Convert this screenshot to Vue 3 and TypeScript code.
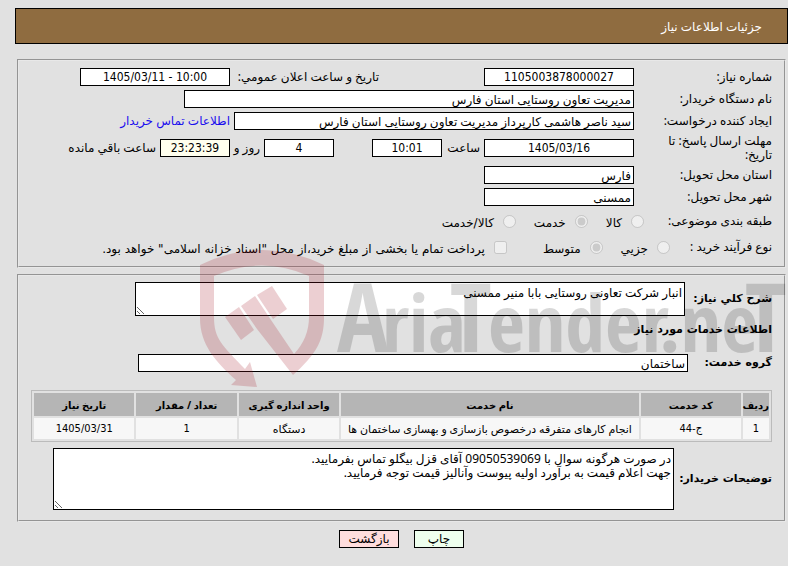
<script setup lang="ts">
import { ref } from 'vue'

interface ServiceRow {
  index: string
  code: string
  name: string
  unit: string
  count: string
  date: string
}

const need = ref({
  number: '1105003878000027',
  announced: '1405/03/11 - 10:00',
  buyer: 'مدیریت تعاون روستایی استان فارس',
  creator: 'سید ناصر هاشمی کارپرداز مدیریت تعاون روستایی استان فارس',
  deadlineDate: '1405/03/16',
  deadlineTime: '10:01',
  daysLeft: '4',
  timeLeft: '23:23:39',
  province: 'فارس',
  city: 'ممسنی',
  subject: 'service',
  process: 'medium',
  treasury: false,
  summary: 'انبار شرکت تعاونی روستایی بابا منیر ممسنی',
  group: 'ساختمان',
  notes:
    'در صورت هرگونه سوال با 09050539069 آقای قزل بیگلو تماس بفرمایید.\nجهت اعلام قیمت به برآورد اولیه پیوست وآنالیز قیمت توجه فرمایید.',
})

const subjects = [
  { value: 'goods', text: 'کالا' },
  { value: 'service', text: 'خدمت' },
  { value: 'both', text: 'کالا/خدمت' },
]

const processes = [
  { value: 'minor', text: 'جزیي' },
  { value: 'medium', text: 'متوسط' },
]

const columns = [
  { key: 'index', title: 'ردیف', numeric: true },
  { key: 'code', title: 'کد خدمت', numeric: true },
  { key: 'name', title: 'نام خدمت', numeric: false },
  { key: 'unit', title: 'واحد اندازه گیری', numeric: false },
  { key: 'count', title: 'تعداد / مقدار', numeric: true },
  { key: 'date', title: 'تاریخ نیاز', numeric: true },
] as const

const services: ServiceRow[] = [
  {
    index: '1',
    code: 'ج-44',
    name: 'انجام کارهای متفرقه درخصوص بازسازی و بهسازی ساختمان ها',
    unit: 'دستگاه',
    count: '1',
    date: '1405/03/31',
  },
]
</script>

<template>
  <div class="page" dir="rtl">
    <header class="title-bar">جزئیات اطلاعات نیاز</header>

    <fieldset class="panel general">
      <div class="row">
        <label class="name" for="number">شماره نیاز:</label>
        <input id="number" v-model="need.number" class="box w150 num" readonly />
        <label class="announced" for="announced">تاریخ و ساعت اعلان عمومي:</label>
        <input id="announced" v-model="need.announced" class="box w150 num" dir="ltr" readonly />
      </div>
      <div class="row">
        <label class="name" for="buyer">نام دستگاه خریدار:</label>
        <input id="buyer" v-model="need.buyer" class="box w450" readonly />
      </div>
      <div class="row">
        <label class="name" for="creator">ایجاد کننده درخواست:</label>
        <input id="creator" v-model="need.creator" class="box w400" readonly />
        <a href="#contact">اطلاعات تماس خریدار</a>
      </div>
      <div class="row">
        <label class="name" for="deadline">مهلت ارسال پاسخ: تا<br />تاریخ:</label>
        <input id="deadline" v-model="need.deadlineDate" class="box w150 num" readonly />
        <label class="hour" for="hour">ساعت</label>
        <input id="hour" v-model="need.deadlineTime" class="box w70 num" readonly />
        <input v-model="need.daysLeft" class="box w70 num days" aria-label="روز" readonly />
        <span class="and">روز و</span>
        <input id="left" v-model="need.timeLeft" class="box w70 num timer" readonly />
        <label for="left">ساعت باقي مانده</label>
      </div>
      <div class="row">
        <label class="name" for="province">استان محل تحویل:</label>
        <input id="province" v-model="need.province" class="box w150" readonly />
      </div>
      <div class="row">
        <label class="name" for="city">شهر محل تحویل:</label>
        <input id="city" v-model="need.city" class="box w150" readonly />
      </div>
      <div class="row choices" role="radiogroup" aria-labelledby="subject">
        <span id="subject" class="subject">طبقه بندی موضوعی:</span>
        <label v-for="s in subjects" :key="s.value" class="choice">
          <input v-model="need.subject" type="radio" name="subject" :value="s.value" disabled />
          <span>{{ s.text }}</span>
        </label>
      </div>
      <div class="row choices">
        <span class="process">نوع فرآیند خرید :</span>
        <label v-for="p in processes" :key="p.value" class="choice">
          <input v-model="need.process" type="radio" name="process" :value="p.value" disabled />
          <span>{{ p.text }}</span>
        </label>
        <label class="choice treasury">
          <input v-model="need.treasury" type="checkbox" disabled />
          <span>پرداخت تمام یا بخشی از مبلغ خرید،از محل "اسناد خزانه اسلامی" خواهد بود.</span>
        </label>
      </div>
    </fieldset>

    <fieldset class="panel details">
      <div class="row">
        <label class="strong" for="summary">شرح کلي نیاز:</label>
        <textarea id="summary" v-model="need.summary" class="area summary" readonly></textarea>
      </div>
      <h2 class="strong heading">اطلاعات خدمات مورد نیاز</h2>
      <div class="row">
        <label class="strong short" for="group">گروه خدمت:</label>
        <input id="group" v-model="need.group" class="box w550" readonly />
      </div>
      <table class="services">
        <colgroup>
          <col v-for="c in columns" :key="c.key" :class="'col-' + c.key" />
        </colgroup>
        <thead>
          <tr>
            <th v-for="c in columns" :key="c.key" scope="col">{{ c.title }}</th>
          </tr>
        </thead>
        <tbody>
          <tr v-for="r in services" :key="r.index">
            <td v-for="c in columns" :key="c.key" :class="{ figure: c.numeric }">{{ r[c.key] }}</td>
          </tr>
        </tbody>
      </table>
      <div class="row">
        <label class="strong wide" for="notes">توضیحات خریدار:</label>
        <textarea id="notes" v-model="need.notes" class="area notes" readonly></textarea>
      </div>
    </fieldset>

    <div class="actions">
      <button type="button" class="print">چاپ</button>
      <button type="button" class="back">بازگشت</button>
    </div>

    <svg class="watermark" width="588" height="140" viewBox="200 249 588 140" aria-hidden="true">
      <g class="emblem">
        <path
          fill-rule="evenodd"
          d="M200 265Q262 235 324 265V318C324 339 316 351 308 360Q301 368 293 375L257 329L241 306L255 296L269 317L271 320L294 354Q309 338 309 317V276Q262 255 214 276V317C214 339 222 345 245 369L250 362L257 387L231 385L236 380C216 362 200 345 200 318Z"
        />
        <path d="M225 317L239 307L254 330L241 340Z" />
        <path d="M257 295L272 286L287 309L273 319Z" />
      </g>
      <g class="brand">
        <text y="352"><tspan class="cap" x="337">A</tspan><tspan x="382">ria</tspan></text>
        <text y="352"><tspan class="cap" x="450">T</tspan><tspan x="488">ender</tspan></text>
        <text y="352"><tspan x="659">.ne</tspan><tspan class="cap" x="745">T</tspan></text>
      </g>
    </svg>
  </div>
</template>

<style>
body {
  margin: 0;
  background: #e1e1e1;
}
</style>

<style scoped>
.page {
  position: relative;
  padding: 8px 0 0 0;
  margin-left: 15px;
  font: 12px/14px "Noto Sans", "DejaVu Sans", sans-serif;
  color: #000;
}

.page * {
  box-sizing: border-box;
}

.title-bar {
  height: 36px;
  padding: 0 25px;
  border: 1px solid #000;
  background: #8f6c40;
  color: #fff;
  line-height: 36px;
}

.panel {
  display: flex;
  flex-direction: column;
  gap: 4px;
  min-width: 0;
  margin: 0 2px;
  padding: 7px 12px 8px 12px;
  border: 2px groove #e8e8e8;
}

.general {
  margin-top: 15px;
}

.details {
  margin-top: 6px;
  padding-top: 6px;
  padding-bottom: 10px;
  gap: 6px;
}

.row {
  display: flex;
  align-items: center;
  gap: 4px;
  white-space: nowrap;
}

.name {
  width: 134px;
}

.announced {
  width: 145px;
  margin-right: 101px;
}

.hour {
  width: 34px;
}

.days {
  margin-right: 34px;
}

.and {
  width: 26px;
}

.box {
  flex: 0 1 auto;
  min-width: 0;
  height: 18px;
  padding: 0 2px;
  border: 1px solid #000;
  border-radius: 0;
  background: #fff;
  color: #000;
  font: inherit;
}

.num {
  text-align: center;
  font: 12px "DejaVu Sans Condensed", "DejaVu Sans", sans-serif;
}

.timer {
  background: #ffffee;
}

.w70 {
  width: 70px;
}

.w150 {
  width: 150px;
}

.w400 {
  width: 400px;
}

.w450 {
  width: 450px;
}

.w550 {
  width: 550px;
}

a {
  color: #1a0dee;
  text-decoration: none;
}

.choices {
  height: 22px;
  gap: 18px;
}

.subject {
  width: 110px;
}

.process {
  width: 84px;
}

.choice {
  display: flex;
  align-items: center;
  gap: 9px;
  font-family: "DejaVu Sans", sans-serif;
}

.choice input {
  width: 13px;
  height: 13px;
  margin: 0;
}

.choice span {
  padding-top: 4px;
}

.treasury {
  margin-right: 18px;
}

.strong {
  margin: 0;
  font: bold 11px/14px "DejaVu Sans", sans-serif;
}

.row > .strong {
  width: 83px;
}

.row > .short {
  width: 80px;
}

.row > .wide {
  width: 94px;
}

.heading {
  padding: 1px 0 11px;
}

.area {
  flex: 0 1 auto;
  min-width: 0;
  margin: 0;
  padding: 3px 2px;
  border: 1px solid #000;
  border-radius: 0;
  background: #fff;
  color: #000;
  font: inherit;
  resize: both;
}

.summary {
  width: 550px;
  height: 34px;
}

.notes {
  width: 621px;
  height: 62px;
}

.services {
  width: 100%;
  margin-top: 12px;
  table-layout: fixed;
  border: 1px solid #bbb;
  border-collapse: separate;
  border-spacing: 2px;
  font-size: 11px;
  text-align: center;
  white-space: nowrap;
}

.services th {
  height: 23px;
  padding: 0;
  background: #b5b5b5;
  font-size: 10px;
}

.services td {
  height: 21px;
  padding: 0;
  background: #f7f7f7;
}

.services .figure {
  font-family: "DejaVu Sans Condensed", "DejaVu Sans", sans-serif;
}

.col-index {
  width: 26px;
}

.col-name {
  width: 41%;
}

.actions {
  display: flex;
  justify-content: center;
  gap: 15px;
  padding: 8px 0 18px;
}

.actions button {
  height: 18px;
  padding: 0;
  border: 1px solid #000;
  border-radius: 0;
  color: #000;
  font: inherit;
}

.print {
  width: 50px;
  background: #eeffee;
}

.back {
  width: 60px;
  background: #ffdddd;
}

.watermark {
  position: absolute;
  top: 249px;
  left: 185px;
  direction: ltr;
  pointer-events: none;
}

.emblem {
  fill: #a51423;
  opacity: 0.2;
}

.brand {
  opacity: 0.15;
  font: bold 80px "Open Sans Condensed", "Roboto Condensed", sans-serif;
}

.cap {
  font-size: 96px;
}
</style>
